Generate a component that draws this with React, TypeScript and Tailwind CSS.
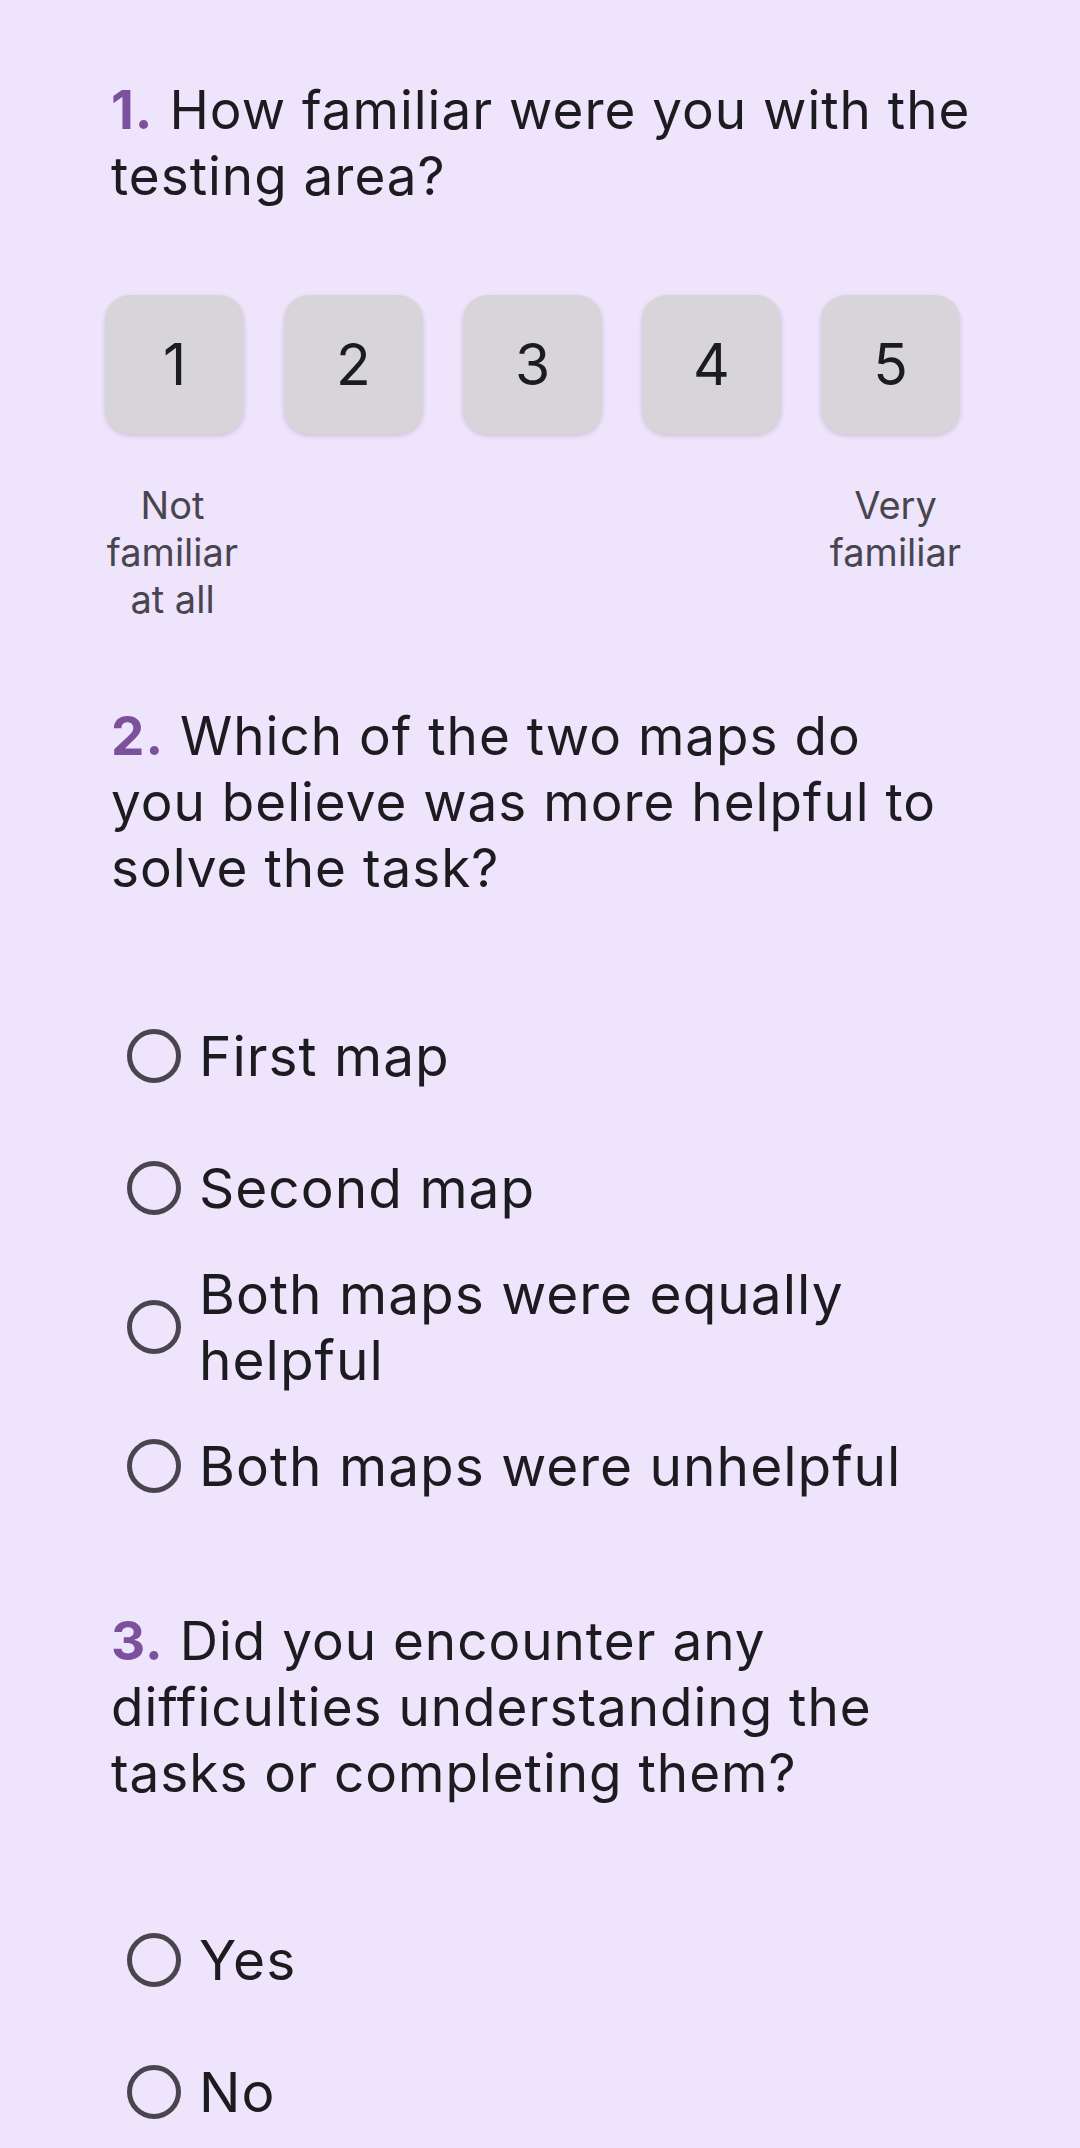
import React from "react";

type Question = {
  id: number;
  lines: string[];
};

const scale = [1, 2, 3, 4, 5];

const QuestionTitle = ({ id, lines }: Question) => {
  return (
    <h2 className="text-[53px] leading-[66px] tracking-[1px] text-[#1c1b1f] font-normal">
      <span className="font-bold text-[#7b519d]">{id}.</span>{" "}
      {lines.map((line, i) => (
        <React.Fragment key={i}>
          {i > 0 && <br />}
          {line}
        </React.Fragment>
      ))}
    </h2>
  );
};

const RadioOption = ({ label }: { label: string }) => {
  return (
    <label className="flex items-center min-h-[132px] py-[7px] cursor-pointer">
      <span className="ml-[16px] w-[54px] h-[54px] shrink-0 rounded-full border-[5px] border-[#49454f]" />
      <span className="ml-[18px] text-[55px] leading-[66px] tracking-[1px] text-[#1c1b1f]">
        {label}
      </span>
    </label>
  );
};

const App = () => {
  return (
    <div
      className="min-h-[2148px] bg-[#eee4fc] pl-[111px] pr-[100px] pt-[77px]"
      style={{ fontFamily: "Inter, 'Noto Sans', sans-serif" }}
    >
      <section>
        <QuestionTitle id={1} lines={["How familiar were you with the", "testing area?"]} />
        <div className="flex gap-[40px] -ml-[6px] mt-[86px]">
          {scale.map((n) => (
            <button
              key={n}
              className="w-[139px] h-[139px] rounded-[25px] bg-[#d8d5da] shadow-[0_2px_5px_rgba(0,0,0,0.15)] flex items-center justify-center text-[57px] text-[#1c1b1f]"
            >
              {n}
            </button>
          ))}
        </div>
        <div className="flex justify-between -ml-[8px] w-[862px] mt-[48px] text-[38px] leading-[47px] text-[#49454f] text-center">
          <p className="w-[139px]">Not familiar at all</p>
          <p className="w-[139px]">Very familiar</p>
        </div>
      </section>

      <section className="mt-[80px]">
        <QuestionTitle
          id={2}
          lines={["Which of the two maps do", "you believe was more helpful to", "solve the task?"]}
        />
        <div className="mt-[89px] flex flex-col w-[858px]">
          <RadioOption label="First map" />
          <RadioOption label="Second map" />
          <RadioOption label="Both maps were equally helpful" />
          <RadioOption label="Both maps were unhelpful" />
        </div>
      </section>

      <section className="mt-[76px]">
        <QuestionTitle
          id={3}
          lines={["Did you encounter any", "difficulties understanding the", "tasks or completing them?"]}
        />
        <div className="mt-[88px] flex flex-col">
          <RadioOption label="Yes" />
          <RadioOption label="No" />
        </div>
      </section>
    </div>
  );
};

export default App;
